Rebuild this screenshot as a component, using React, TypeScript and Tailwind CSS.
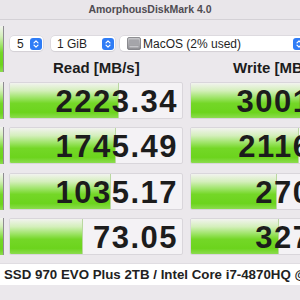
import React from 'react';

const BAR =
  'bg-[linear-gradient(to_bottom,#f2f3ef_0%,#d4efbb_22%,#9ee468_42%,#74d727_58%,#6cd41d_84%,#8cdc4f_100%)]';

const rows = [
  { read: '2223.34', readBar: 109, write: '3001.26', writeBar: 116 },
  { read: '1745.49', readBar: 106, write: '2116.19', writeBar: 108 },
  { read: '1035.17', readBar: 101, write: '270.64', writeBar: 86 },
  { read: '73.05', readBar: 73, write: '327.05', writeBar: 88 },
];

const Stepper = () => (
  <div className="w-[12px] h-[12px] rounded-[3px] bg-[#2f7cf6] flex items-center justify-center">
    <svg width="8" height="10" viewBox="0 0 8 10" fill="none">
      <path d="M2 3.8 L4 1.8 L6 3.8" stroke="white" strokeWidth="1.2" strokeLinecap="round" strokeLinejoin="round" />
      <path d="M2 6.2 L4 8.2 L6 6.2" stroke="white" strokeWidth="1.2" strokeLinecap="round" strokeLinejoin="round" />
    </svg>
  </div>
);

const DiskIcon = () => (
  <svg width="14" height="13" viewBox="0 0 14 13">
    <defs>
      <linearGradient id="dk" x1="0" y1="0" x2="0" y2="1">
        <stop offset="0" stopColor="#c9c9cc" />
        <stop offset="1" stopColor="#8e8e93" />
      </linearGradient>
    </defs>
    <rect x="0.5" y="0.5" width="13" height="12" rx="1.5" fill="url(#dk)" stroke="#77777c" strokeWidth="0.8" />
    <rect x="2" y="2.5" width="10" height="5" rx="0.8" fill="#a5a5aa" />
    <line x1="2.5" y1="9.8" x2="11.5" y2="9.8" stroke="#e6e6e8" strokeWidth="0.8" />
  </svg>
);

const Cell = ({ value, bar }: { value: string; bar: number }) => (
  <div className="relative w-[174px] h-[37px] shrink-0 bg-[#f4f2f5] border border-[#d9d6db] rounded-[2px] overflow-hidden">
    <div className={`absolute left-0 top-0 bottom-0 ${BAR} border-r border-[#b9d8a0]`} style={{ width: bar }} />
    <div className="relative h-full flex items-end justify-end pr-[4px] pb-[1px] text-[31px] leading-[31px] tracking-[1.5px] font-bold text-[#1c1c1c]">
      {value}
    </div>
  </div>
);

export default function App() {
  return (
    <div className="w-[300px] h-[300px] overflow-hidden bg-[#ebe8ec] font-['Liberation_Sans',Arial,sans-serif]">
      <div className="h-[20px] bg-[#e9e6ea] border-b border-[#d4d1d6] flex items-center justify-center text-[10.5px] font-bold text-[#4f4c52]">
        AmorphousDiskMark 4.0
      </div>

      <div className="flex h-[62px]">
        <div className="w-[4px] shrink-0 pt-[6px]">
          <div className={`h-[46px] ${BAR} border-r border-[#8f8c92]`} />
        </div>
        <div className="ml-[6px] flex flex-col">
          <div className="mt-[16px] flex items-center h-[15px] text-[12px] text-[#1f1f1f]">
            <div className="w-[33px] h-[15px] bg-white rounded-[4px] shadow-[0_0_0_0.5px_#cfccd2,0_1px_1px_rgba(0,0,0,0.08)] flex items-center justify-between pl-[7px] pr-[1px]">
              <span>5</span>
              <Stepper />
            </div>
            <div className="ml-[8px] w-[64px] h-[15px] bg-white rounded-[4px] shadow-[0_0_0_0.5px_#cfccd2,0_1px_1px_rgba(0,0,0,0.08)] flex items-center justify-between pl-[6px] pr-[1px]">
              <span>1 GiB</span>
              <Stepper />
            </div>
            <div className="ml-[5px] w-[186px] shrink-0 h-[15px] bg-white rounded-[4px] shadow-[0_0_0_0.5px_#cfccd2,0_1px_1px_rgba(0,0,0,0.08)] flex items-center justify-between pl-[7px] pr-[1px]">
              <div className="flex items-center gap-[2px]">
                <DiskIcon />
                <span>MacOS (2% used)</span>
              </div>
              <Stepper />
            </div>
          </div>
          <div className="mt-[9px] flex -ml-[1px] text-[15px] leading-[15px] font-bold text-[#1c1c1c]">
            <div className="w-[174px] pl-[44px]">Read [MB/s]</div>
            <div className="ml-[7px] w-[174px] pl-[43px] whitespace-nowrap">Write [MB/s]</div>
          </div>
        </div>
      </div>

      <div className="flex flex-col">
        {rows.map((r, i) => (
          <div key={i} className={`flex h-[37px] ${i === 0 ? '' : i === 2 ? 'mt-[9px]' : 'mt-[8px]'}`}>
            <div className={`w-[4px] shrink-0 ${BAR} border-r border-[#8f8c92]`} />
            <div className="ml-[5px] flex gap-[7px]">
              <Cell value={r.read} bar={r.readBar} />
              <Cell value={r.write} bar={r.writeBar} />
            </div>
          </div>
        ))}
      </div>

      <div className="mt-[8px] h-[22px] bg-white border-t border-[#e0dde2] pl-[4px] text-[13.3px] leading-[21px] font-bold text-[#222] whitespace-nowrap">
        SSD 970 EVO Plus 2TB / Intel Core i7-4870HQ @ 2.50GHz
      </div>
    </div>
  );
}
